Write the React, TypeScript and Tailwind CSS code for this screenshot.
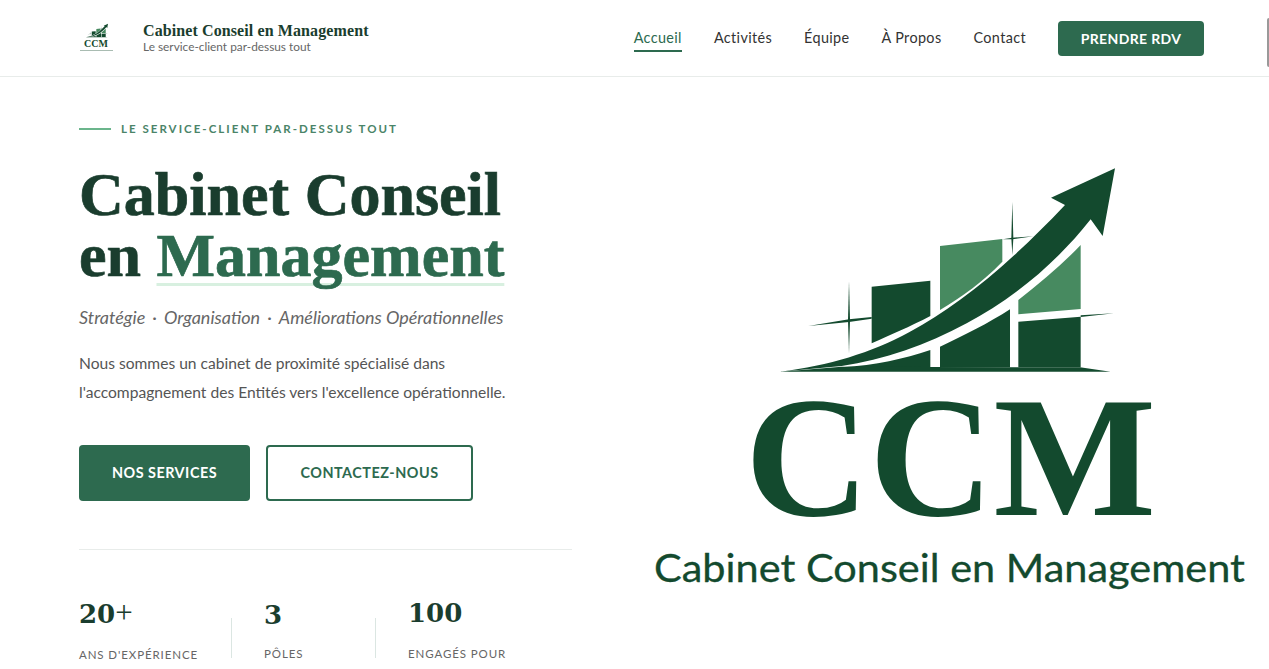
const G = "#134a2e";
const L = "#478a60";

function Mark() {
  return (
    <svg viewBox="0 0 1080 660" className="block h-full w-full" aria-hidden="true">
      <path fill={G} d="M305 380 L481 362 L481 468 C420 500 360 525 305 550 Z" />
      <path fill={L} d="M510 258 L697 237 L697 305 C640 365 575 410 510 450 Z" />
      <path fill={L} d="M745 420 C815 365 880 310 932 255 L932 447 L745 463 Z" />
      <path fill={G} d="M510 560 C585 525 655 490 720 448 L720 622 L510 622 Z" />
      <path fill={G} d="M745 485 L932 470 L932 622 L745 622 Z" />
      <path fill={G} d="M215 622 C320 615 400 597 481 570 L481 622 Z" />
      <path fill={G} d="M30 635 L215 620 L930 622 L1022 635 Z" />
      <path fill={G} d="M30 635 C180 615 300 580 420 515 C560 440 710 320 885 135 L843 113 L1035 25 L998 228 L962 178 C850 320 720 420 590 490 C470 555 340 600 215 618 Z" />
      <path fill={G} d="M115 498 L237 478 L305 471 L305 476 L237 486 Z" />
      <path fill={G} d="M237 363 L240 480 L237 580 L234 480 Z" />
      <path fill={G} d="M727 125 L730 235 L727 285 L724 235 Z" />
      <path fill={G} d="M698 238 L727 233 L790 229 L727 238 Z" />
      <path fill={G} d="M932 466 L1032 460 L932 471 Z" />
    </svg>
  );
}

function Logo() {
  return (
    <svg viewBox="0 0 640 476" className="block h-full w-full">
      <svg x="141" y="9" width="360" height="220" viewBox="0 0 1080 660">
        <path fill={G} d="M305 380 L481 362 L481 468 C420 500 360 525 305 550 Z" />
        <path fill={L} d="M510 258 L697 237 L697 305 C640 365 575 410 510 450 Z" />
        <path fill={L} d="M745 420 C815 365 880 310 932 255 L932 447 L745 463 Z" />
        <path fill={G} d="M510 560 C585 525 655 490 720 448 L720 622 L510 622 Z" />
        <path fill={G} d="M745 485 L932 470 L932 622 L745 622 Z" />
        <path fill={G} d="M215 622 C320 615 400 597 481 570 L481 622 Z" />
        <path fill={G} d="M30 635 L215 620 L930 622 L1022 635 Z" />
        <path fill={G} d="M30 635 C180 615 300 580 420 515 C560 440 710 320 885 135 L843 113 L1035 25 L998 228 L962 178 C850 320 720 420 590 490 C470 555 340 600 215 618 Z" />
        <path fill={G} d="M115 498 L237 478 L305 471 L305 476 L237 486 Z" />
        <path fill={G} d="M237 363 L240 480 L237 580 L234 480 Z" />
        <path fill={G} d="M727 125 L730 235 L727 285 L724 235 Z" />
        <path fill={G} d="M698 238 L727 233 L790 229 L727 238 Z" />
        <path fill={G} d="M932 466 L1032 460 L932 471 Z" />
      </svg>
      <text x="116" y="364" fontFamily="'Liberation Serif', serif" fontWeight="700" fontSize="172" fill={G} textLength="411" lengthAdjust="spacingAndGlyphs">CCM</text>
      <text x="25" y="431" fontFamily="Lato, sans-serif" fontSize="39" fill={G} stroke={G} strokeWidth="0.3" textLength="591" lengthAdjust="spacingAndGlyphs">Cabinet Conseil en Management</text>
    </svg>
  );
}

function Stat({ n, plus, l, width, border, drop }: { n: string; plus?: boolean; l: string; width: string; border?: boolean; drop?: boolean }) {
  return (
    <div className={border ? "relative ml-[33px] pl-[33px]" : ""}>
      {border ? <span className="absolute left-0 top-[20px] h-[40px] w-px bg-[#dbe6e2]" /> : null}
      <div className={`font-['DejaVu_Serif',serif] text-[26px] font-bold leading-[30px] text-[#1a3d2e] ${drop ? "translate-y-[2px]" : ""}`}>
        {n}
        {plus ? <span className="font-['Liberation_Serif',serif] text-[31px] font-normal">+</span> : null}
      </div>
      <div className={`mt-[17px] whitespace-nowrap text-[11.5px] uppercase leading-[18px] tracking-[0.9px] text-[#666666] ${width}`}>{l}</div>
    </div>
  );
}

export default function App() {
  return (
    <div className="relative h-[669px] w-[1269px] overflow-hidden bg-white font-['Lato',sans-serif]">
      <header className="flex h-[77px] items-center border-b border-[#e8ecea] pl-[79px] pr-[65px]">
        <div className="flex h-[30px] w-[34px] shrink-0 flex-col items-center">
          <div className="h-[15px] w-[24px] translate-x-[1px]"><Mark /></div>
          <div className="mt-[1px] font-['Liberation_Serif',serif] text-[10px] font-bold leading-[9px] text-[#134a2e]">CCM</div>
          <div className="mt-[2px] h-px w-[33px] bg-[#a9bcb2]" />
        </div>
        <div className="ml-[30px] -mt-[1px]">
          <div className="font-['Liberation_Serif',serif] text-[16px] font-bold leading-[18px] tracking-[0.1px] text-[#1a3d2e]">Cabinet Conseil en Management</div>
          <div className="text-[11.85px] leading-[14px] text-[#666666]">Le service-client par-dessus tout</div>
        </div>
        <nav className="ml-auto flex items-center gap-[32px] text-[14.4px] tracking-[0.37px] text-[#333333]">
          <a className="relative text-[#2d6a4f]">
            Accueil
            <span className="absolute -bottom-[3px] left-0 right-0 h-[2px] bg-[#2d6a4f]" />
          </a>
          <a>Activités</a>
          <a>Équipe</a>
          <a>À Propos</a>
          <a>Contact</a>
          <button className="flex h-[35px] w-[146px] items-center justify-center rounded-[4px] bg-[#2d6a4f] text-[14px] font-bold tracking-[0.35px] text-white">PRENDRE RDV</button>
        </nav>
      </header>
      <main className="flex">
        <section className="ml-[79px] w-[493px] shrink-0">
          <div className="mt-[45px] flex items-center gap-[10px]">
            <span className="h-[2px] w-[32px] bg-[#6bb58c]" />
            <span className="text-[11.5px] font-bold leading-[14px] tracking-[2.03px] text-[#4a8468]">LE SERVICE-CLIENT PAR-DESSUS TOUT</span>
          </div>
          <h1 className="mt-[28px] font-['Liberation_Serif',serif] text-[62px] font-bold leading-[61px] text-[#1a3d2e] [-webkit-text-stroke:0.7px]">
            <div>Cabinet Conseil</div>
            <div>en <span className="text-[#2d6a4f] underline decoration-[#d8f0e0] decoration-[3px] underline-offset-[7px] [text-decoration-skip-ink:none]">Management</span></div>
          </h1>
          <p className="mt-[19px] text-[18px] italic leading-[24px] text-[#666666]">
            Stratégie<span className="mx-[7px]">·</span>Organisation<span className="mx-[7px]">·</span>Améliorations Opérationnelles
          </p>
          <p className="mt-[20px] text-[15.6px] leading-[29px] text-[#555555]">
            Nous sommes un cabinet de proximité spécialisé dans<br />l'accompagnement des Entités vers l'excellence opérationnelle.
          </p>
          <div className="mt-[38px] flex gap-[16px]">
            <button className="flex h-[56px] w-[171px] items-center justify-center rounded-[4px] bg-[#2d6a4f] text-[14.4px] font-bold tracking-[0.5px] text-white">NOS SERVICES</button>
            <button className="flex h-[56px] w-[207px] items-center justify-center rounded-[4px] border-2 border-[#2d6a4f] text-[14.4px] font-bold tracking-[0.5px] text-[#2d6a4f]">CONTACTEZ-NOUS</button>
          </div>
          <div className="mt-[48px] h-px bg-[#e8ecea]" />
          <div className="mt-[48px] flex">
            <Stat n="20" plus l="Ans d'expérience" width="w-[119px]" />
            <Stat n="3" drop l="Pôles" width="w-[78px]" border />
            <Stat n="100" l="Engagés pour" width="w-[120px]" border />
          </div>
        </section>
        <div className="ml-[57px] mt-[74px] h-[476px] w-[640px] shrink-0"><Logo /></div>
      </main>
      <span className="absolute right-0 top-[18px] h-[49px] w-[2px] rounded-l-[2px] bg-[#999999]" />
    </div>
  );
}
